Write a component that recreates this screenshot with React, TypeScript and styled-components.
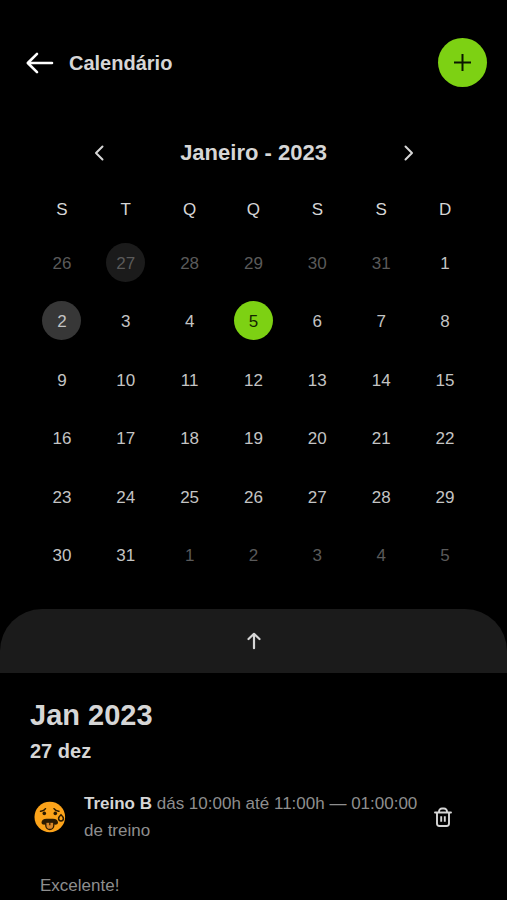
import React from "react";
import styled, { createGlobalStyle } from "styled-components";

const GlobalStyle = createGlobalStyle`
  *, *::before, *::after { box-sizing: border-box; }
  body {
    margin: 0;
    background: #000;
    color: #d6d6d6;
    font-family: "Liberation Sans", Helvetica, Arial, sans-serif;
    overflow: hidden;
  }
  h1, h2, h3, p { margin: 0; }
`;

const Screen = styled.main`
  display: flex;
  flex-direction: column;
  min-height: 100vh;
`;

const Header = styled.header`
  display: flex;
  align-items: center;
  gap: 13px;
  padding: 38px 20px 0 24px;
`;

const IconButton = styled.button`
  display: flex;
  align-items: center;
  justify-content: center;
  flex: none;
  width: 32px;
  height: 32px;
  padding: 0;
  border: 0;
  background: none;
  color: #d6d6d6;
  cursor: pointer;
`;

const BackButton = styled(IconButton)`
  color: #fff;
`;

const AddButton = styled(IconButton)`
  width: 49px;
  height: 49px;
  margin-left: auto;
  border-radius: 50%;
  background: #7dd113;
  color: #0b1600;
`;

const DeleteButton = styled(IconButton)`
  width: 22px;
  margin-right: 23px;
`;

const PageTitle = styled.h1`
  font-size: 20px;
  line-height: 24px;
`;

const MonthNav = styled.nav`
  display: flex;
  align-items: center;
  justify-content: space-between;
  padding: 50px 83px 18px;
`;

const MonthTitle = styled.h2`
  font-size: 22px;
  line-height: 32px;
`;

const CalendarTable = styled.table`
  width: calc(100% - 60px);
  height: 397px;
  margin: 0 30px;
  border-collapse: collapse;
  table-layout: fixed;
`;

const Weekday = styled.th`
  height: 46px;
  padding: 0;
  font-size: 17px;
  font-weight: 400;
  text-align: center;
`;

const DayCell = styled.td`
  padding: 0;
  text-align: center;
  vertical-align: middle;
`;

type Mark = "none" | "faint" | "soft" | "active";

const markColors: Record<Mark, string> = {
  none: "transparent",
  faint: "#1b1b1b",
  soft: "#373737",
  active: "#7dd113",
};

const DayButton = styled.button<{ $mark: Mark; $outside: boolean }>`
  display: block;
  width: 39px;
  height: 39px;
  margin: 0 auto;
  padding: 0;
  border: 0;
  border-radius: 50%;
  background: ${(p) => markColors[p.$mark]};
  color: ${(p) => (p.$mark === "active" ? "#142600" : p.$outside ? "#5a5a5a" : "#c4c4c4")};
  font: inherit;
  font-size: 17px;
  line-height: 41px;
  cursor: pointer;
`;

const SheetHandle = styled.button`
  display: flex;
  align-items: center;
  justify-content: center;
  width: 100%;
  height: 64px;
  margin-top: 25px;
  padding: 0;
  border: 0;
  border-radius: 42px 42px 0 0;
  background: #1b1b1b;
  color: #d6d6d6;
  cursor: pointer;
`;

const Agenda = styled.section`
  display: flex;
  flex-direction: column;
  padding: 24px 30px 0;
`;

const AgendaMonth = styled.h2`
  font-size: 29px;
  line-height: 36px;
`;

const AgendaDay = styled.h3`
  margin-top: 6px;
  font-size: 20px;
  line-height: 24px;
`;

const Entry = styled.article`
  display: flex;
  align-items: center;
  gap: 10px;
  margin-top: 27px;
`;

const EntryText = styled.p`
  flex: 1;
  min-width: 0;
  color: #8e8e8e;
  font-size: 17px;
  line-height: 27px;
`;

const EntryName = styled.strong`
  color: #d6d6d6;
`;

const Note = styled.p`
  margin-top: 28px;
  padding-left: 10px;
  color: #8e8e8e;
  font-size: 17px;
  line-height: 27px;
`;

const line = {
  fill: "none",
  stroke: "currentColor",
  strokeLinecap: "round" as const,
  strokeLinejoin: "round" as const,
  "aria-hidden": true,
};

const BackIcon = () => (
  <svg width="32" height="24" viewBox="0 0 32 24" strokeWidth="2.6" {...line}>
    <path d="M28 12H4M13 2.8 3.800 12l9.200 9.200" />
  </svg>
);

const PlusIcon = () => (
  <svg width="19" height="19" viewBox="0 0 19 19" strokeWidth="2" {...line} strokeLinecap="butt">
    <path d="M9.500 1v17M1 9.500h17" />
  </svg>
);

const ChevronIcon = ({ d }: { d: string }) => (
  <svg width="16" height="20" viewBox="0 0 16 20" strokeWidth="2" {...line}>
    <path d={d} />
  </svg>
);

const UpIcon = () => (
  <svg width="18" height="20" viewBox="0 0 18 20" strokeWidth="2.200" {...line}>
    <path d="M9 17.200V3M3.500 8 9 2.800 14.500 8" />
  </svg>
);

const TrashIcon = () => (
  <svg width="20" height="22" viewBox="0 0 20 22" strokeWidth="1.9" {...line}>
    <path d="M2 6.500h16M4 6.500v11A2.500 2.500 0 0 0 6.500 20h7a2.500 2.500 0 0 0 2.500-2.500v-11M6 6V5.500A3 3 0 0 1 9 2.500h2A3 3 0 0 1 14 5.500V6" />
    <path d="M8.200 10.200v5.600M11.800 10.200v5.600" strokeLinecap="butt" />
  </svg>
);

const TiredFace = () => (
  <svg width="44" height="32" viewBox="0 0 44 32" role="img" aria-label="Exausto">
    <circle cx="19.800" cy="16" r="15.300" fill="#fca31a" />
    <g fill="none" stroke="#2b1a00" strokeWidth="1.500" strokeLinecap="round">
      <path d="M10.500 10.200c2 .1 3.900-.7 5-2.500M24 7.700c1.100 1.800 3 2.600 5 2.500" />
    </g>
    <circle cx="14.300" cy="12.400" r="1.800" fill="#2b1a00" />
    <circle cx="25.300" cy="12.400" r="1.800" fill="#2b1a00" />
    <path d="M16.500 17.800h6.500c3 0 5 1.600 5 3.600 0 1.600-1.800 2.600-3.500 2.200H15c-1.700.4-3.500-.6-3.500-2.200 0-2 2-3.600 5-3.600z" fill="#2b1a00" />
    <path d="M15.800 21.200h8v3.300a4 4 0 0 1-8 0z" fill="#d9872a" stroke="#2b1a00" strokeWidth="1.300" />
    <path d="M19.800 21.200v3" stroke="#2b1a00" strokeWidth="1.200" />
    <path d="M31 13.800c1.600 1.500 2.400 2.600 2.400 3.700a2.400 2.400 0 0 1-4.800 0c0-1.100.8-2.200 2.400-3.700z" fill="#fca31a" stroke="#2b1a00" strokeWidth="1.500" />
  </svg>
);

const weekdays = [
  ["S", "segunda"],
  ["T", "terça"],
  ["Q", "quarta"],
  ["Q", "quinta"],
  ["S", "sexta"],
  ["S", "sábado"],
  ["D", "domingo"],
];

interface Day {
  label: number;
  outside: boolean;
  mark: Mark;
}

const days: Day[] = Array.from({ length: 42 }, (_, i) => {
  const offset = i - 5;
  const outside = offset < 1 || offset > 31;
  const label = offset < 1 ? offset + 31 : offset > 31 ? offset - 31 : offset;
  const mark: Mark = offset === -4 ? "faint" : offset === 2 ? "soft" : offset === 5 ? "active" : "none";
  return { label, outside, mark };
});

const weeks = Array.from({ length: 6 }, (_, w) => days.slice(w * 7, w * 7 + 7));

export default function App() {
  return (
    <Screen>
      <GlobalStyle />
      <Header>
        <BackButton aria-label="Voltar"><BackIcon /></BackButton>
        <PageTitle>Calendário</PageTitle>
        <AddButton aria-label="Adicionar"><PlusIcon /></AddButton>
      </Header>

      <MonthNav aria-label="Mês">
        <IconButton aria-label="Mês anterior"><ChevronIcon d="M11.500 3.500 5 10l6.500 6.500" /></IconButton>
        <MonthTitle>Janeiro - 2023</MonthTitle>
        <IconButton aria-label="Próximo mês"><ChevronIcon d="M5.500 3.500 12 10l-6.500 6.500" /></IconButton>
      </MonthNav>

      <CalendarTable>
        <thead>
          <tr>
            {weekdays.map(([short, name]) => (
              <Weekday key={name} scope="col" abbr={name}>{short}</Weekday>
            ))}
          </tr>
        </thead>
        <tbody>
          {weeks.map((week, w) => (
            <tr key={w}>
              {week.map((day) => (
                <DayCell key={day.label}>
                  <DayButton $mark={day.mark} $outside={day.outside}>{day.label}</DayButton>
                </DayCell>
              ))}
            </tr>
          ))}
        </tbody>
      </CalendarTable>

      <SheetHandle aria-label="Expandir agenda"><UpIcon /></SheetHandle>

      <Agenda>
        <AgendaMonth>Jan 2023</AgendaMonth>
        <AgendaDay>27 dez</AgendaDay>
        <Entry>
          <TiredFace />
          <EntryText>
            <EntryName>Treino B</EntryName> dás 10:00h até 11:00h — 01:00:00 de treino
          </EntryText>
          <DeleteButton aria-label="Excluir treino"><TrashIcon /></DeleteButton>
        </Entry>
        <Note>Excelente!</Note>
      </Agenda>
    </Screen>
  );
}
